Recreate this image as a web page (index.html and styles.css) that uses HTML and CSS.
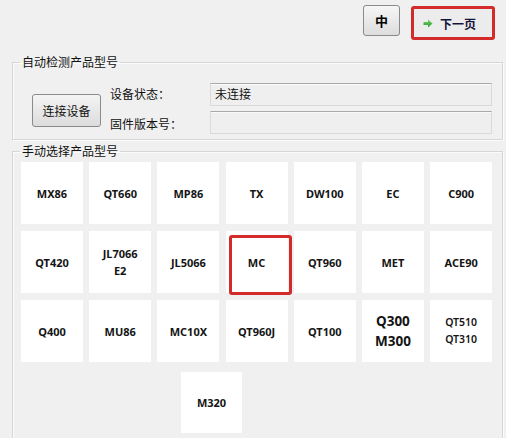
FILE: index.html
```html
<!DOCTYPE html>
<html lang="zh-CN">
<head>
<meta charset="utf-8">
<title>产品型号选择</title>
<link rel="stylesheet" href="styles.css">
</head>
<body>
<div class="topbar">
  <button class="btn-lang">中</button>
  <button class="btn-next">
    <svg class="arrow" width="10" height="9" viewBox="0 0 10 9">
      <defs>
        <linearGradient id="g" x1="0" y1="0" x2="0" y2="1">
          <stop offset="0" stop-color="#7fd36a"/>
          <stop offset="1" stop-color="#1f9a2e"/>
        </linearGradient>
      </defs>
      <path d="M0.5 3 H5 V0.5 L9.5 4.5 L5 8.5 V6 H0.5 Z" fill="url(#g)"/>
    </svg>
    <span>下一页</span>
  </button>
</div>

<fieldset class="group group-auto">
  <legend>自动检测产品型号</legend>
  <div class="auto-grid">
    <button class="btn-connect">连接设备</button>
    <span class="lbl lbl1">设备状态：</span>
    <div class="field field1">未连接</div>
    <span class="lbl lbl2">固件版本号：</span>
    <div class="field field2"></div>
  </div>
</fieldset>

<fieldset class="group group-manual">
  <legend>手动选择产品型号</legend>
  <div class="tiles">
    <div class="tile">MX86</div>
    <div class="tile">QT660</div>
    <div class="tile">MP86</div>
    <div class="tile">TX</div>
    <div class="tile">DW100</div>
    <div class="tile">EC</div>
    <div class="tile">C900</div>
    <div class="tile">QT420</div>
    <div class="tile two">JL7066<br>E2</div>
    <div class="tile">JL5066</div>
    <div class="tile selected">MC</div>
    <div class="tile">QT960</div>
    <div class="tile">MET</div>
    <div class="tile">ACE90</div>
    <div class="tile">Q400</div>
    <div class="tile">MU86</div>
    <div class="tile">MC10X</div>
    <div class="tile">QT960J</div>
    <div class="tile">QT100</div>
    <div class="tile big">Q300<br>M300</div>
    <div class="tile small">QT510<br>QT310</div>
  </div>
  <div class="lastrow">
    <div class="tile">M320</div>
  </div>
</fieldset>
</body>
</html>
```

FILE: styles.css
```css
* { box-sizing: border-box; }
html, body {
  margin: 0;
  padding: 0;
  background: #f0f0f0;
  width: 506px;
  height: 438px;
  overflow: hidden;
  font-family: "Noto Sans CJK SC", "Noto Sans", sans-serif;
  font-size: 12px;
  color: #111;
}

.topbar {
  display: flex;
  justify-content: flex-end;
  align-items: flex-start;
  gap: 11px;
  padding: 5px 11px 0 0;
  height: 40px;
}

.btn-lang {
  width: 37px;
  height: 31px;
  margin: 0;
  padding: 0;
  border: 1px solid #8a8a8a;
  border-radius: 3px;
  background: linear-gradient(#f6f6f6, #dddddd);
  font-family: "Noto Sans CJK SC", sans-serif;
  font-weight: bold;
  font-size: 13px;
  color: #000;
}

.btn-next {
  width: 84px;
  height: 34px;
  margin: 1px 0 0 0;
  padding: 0 0 0 9px;
  border: 3px solid #d32a2a;
  border-radius: 3px;
  background: #ececec;
  display: flex;
  align-items: center;
  gap: 7px;
  font-family: "Noto Sans CJK SC", sans-serif;
  font-weight: bold;
  font-size: 12px;
  color: #14143a;
}
.arrow { display: block; }

.group {
  margin: 0 3px 0 12px;
  border: 1px solid #d6d6d6;
  box-shadow: inset 1px 1px 0 #fbfbfb, 1px 1px 0 #fbfbfb;
  padding: 0 10px 0 8px;
  min-width: 0;
}
.group legend {
  padding: 0 2px;
  margin-left: -1px;
  font-size: 12px;
  line-height: 16px;
  color: #111;
}

.group-auto {
  margin-top: 14px;
  padding-top: 13px;
  padding-bottom: 5px;
}

.auto-grid {
  display: grid;
  grid-template-columns: 89px 100px 1fr;
  grid-template-rows: 23px 23px;
  row-gap: 5px;
}
.btn-connect {
  grid-column: 1;
  grid-row: 1 / span 2;
  align-self: start;
  margin: 11px 0 0 11px;
  width: 69px;
  height: 33px;
  padding: 0;
  border: 1px solid #8a8a8a;
  border-radius: 3px;
  background: linear-gradient(#f4f4f4, #dcdcdc);
  font-family: "Noto Sans CJK SC", sans-serif;
  font-size: 12px;
  color: #111;
}
.lbl {
  grid-column: 2;
  align-self: center;
  line-height: 16px;
}
.lbl1 { grid-row: 1; margin-top: -1px; }
.lbl2 { grid-row: 2; margin-top: 2px; }
.field {
  grid-column: 3;
  border: 1px solid #dadada;
  border-top-color: #a9a9a9;
  background: #efefef;
  box-shadow: inset 0 1px 0 #fafafa;
  padding: 2px 0 0 4px;
  line-height: 16px;
  font-size: 12px;
}
.field1 { grid-row: 1; }
.field2 { grid-row: 2; }

.group-manual {
  margin-top: 3px;
  padding-top: 3px;
  height: 300px;
}

.tiles {
  display: grid;
  grid-template-columns: repeat(7, 62px);
  grid-auto-rows: 62px;
  column-gap: 6.2px;
  row-gap: 7px;
}
.tile {
  background: #ffffff;
  display: flex;
  align-items: center;
  justify-content: center;
  text-align: center;
  font-family: "Noto Sans", sans-serif;
  font-weight: bold;
  font-size: 11px;
  line-height: 17px;
  color: #141414;
  position: relative;
}
.tile.big {
  font-size: 13.5px;
  line-height: 20px;
}
.tile.small {
  font-weight: 600;
  font-size: 10.5px;
  line-height: 17px;
}
.tile.selected::after {
  content: "";
  position: absolute;
  left: 3px;
  top: 4px;
  right: -4px;
  bottom: -2px;
  border: 3px solid #d32a2a;
  border-radius: 3px;
}

.lastrow {
  display: flex;
  padding-left: 160px;
  margin-top: 10px;
}
.lastrow .tile {
  width: 61px;
  height: 61px;
}
```
